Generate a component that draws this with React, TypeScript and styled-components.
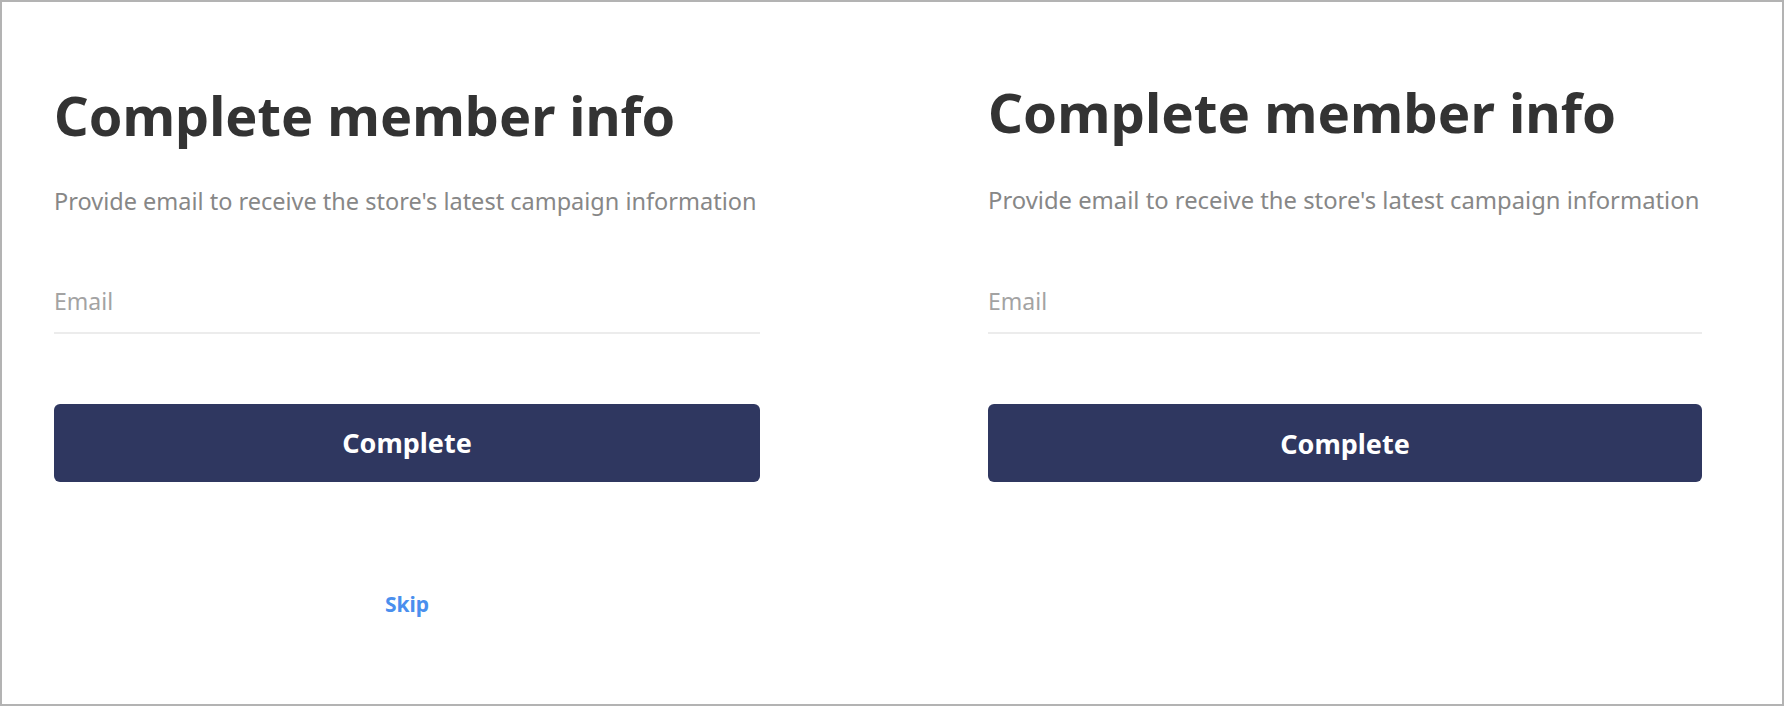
import React from "react";
import styled, { createGlobalStyle } from "styled-components";

const GlobalStyle = createGlobalStyle`
  html, body {
    margin: 0;
    padding: 0;
    background: #ffffff;
  }
  body {
    font-family: "Noto Sans", "Open Sans", sans-serif;
  }
  * {
    box-sizing: border-box;
  }
`;

interface PanelProps {
  /** Skipリンクを表示するか */
  showSkip?: boolean;
  /** 少し大きめの表示 */
  wide?: boolean;
}

const Frame = styled.div`
  width: 1784px;
  height: 706px;
  border: 2px solid #b3b3b3;
  background: #ffffff;
  display: grid;
  grid-template-columns: 706px 714px;
  column-gap: 228px;
  padding: 81px 0 0 52px;
`;

const Panel = styled.section`
  display: flex;
  flex-direction: column;
`;

const Title = styled.h1<{ $wide?: boolean }>`
  margin: ${(p) => (p.$wide ? "-3px 0 0" : "0")};
  font-size: ${(p) => (p.$wide ? "54.6px" : "54px")};
  line-height: 1.2;
  font-weight: 700;
  color: #333333;
`;

const Subtitle = styled.p<{ $wide?: boolean }>`
  margin: ${(p) => (p.$wide ? "40px" : "39px")} 0 0;
  font-size: ${(p) => (p.$wide ? "23.8px" : "23.5px")};
  line-height: 1.2;
  color: #878787;
  white-space: nowrap;
`;

const EmailInput = styled.input<{ $wide?: boolean }>`
  margin-top: ${(p) => (p.$wide ? "56px" : "55px")};
  width: 100%;
  height: 64px;
  padding: 0;
  border: none;
  border-bottom: 2px solid #ececec;
  outline: none;
  font-family: inherit;
  font-size: 23px;
  color: #333333;
  background: transparent;

  &::placeholder {
    color: #a3a3a3;
  }
`;

const SubmitButton = styled.button`
  margin-top: 70px;
  width: 100%;
  height: 78px;
  border: none;
  border-radius: 6px;
  background: #2f3760;
  color: #ffffff;
  font-family: inherit;
  font-size: 27px;
  font-weight: 700;
  cursor: pointer;
`;

const SkipLink = styled.a`
  margin-top: 110px;
  align-self: center;
  font-size: 21px;
  line-height: 1.2;
  font-weight: 700;
  color: #4a8fee;
  text-decoration: none;
  cursor: pointer;
`;

const MemberInfoForm = (props: PanelProps) => {
  const [email, setEmail] = React.useState("");

  return (
    <Panel>
      <Title $wide={props.wide}>Complete member info</Title>
      <Subtitle $wide={props.wide}>
        Provide email to receive the store's latest campaign information
      </Subtitle>
      <EmailInput
        $wide={props.wide}
        type="email"
        placeholder="Email"
        value={email}
        onChange={(e) => setEmail(e.target.value)}
      />
      <SubmitButton type="button">Complete</SubmitButton>
      {props.showSkip && <SkipLink>Skip</SkipLink>}
    </Panel>
  );
};

export default function App() {
  return (
    <>
      <GlobalStyle />
      <Frame>
        <MemberInfoForm showSkip />
        <MemberInfoForm wide />
      </Frame>
    </>
  );
}
